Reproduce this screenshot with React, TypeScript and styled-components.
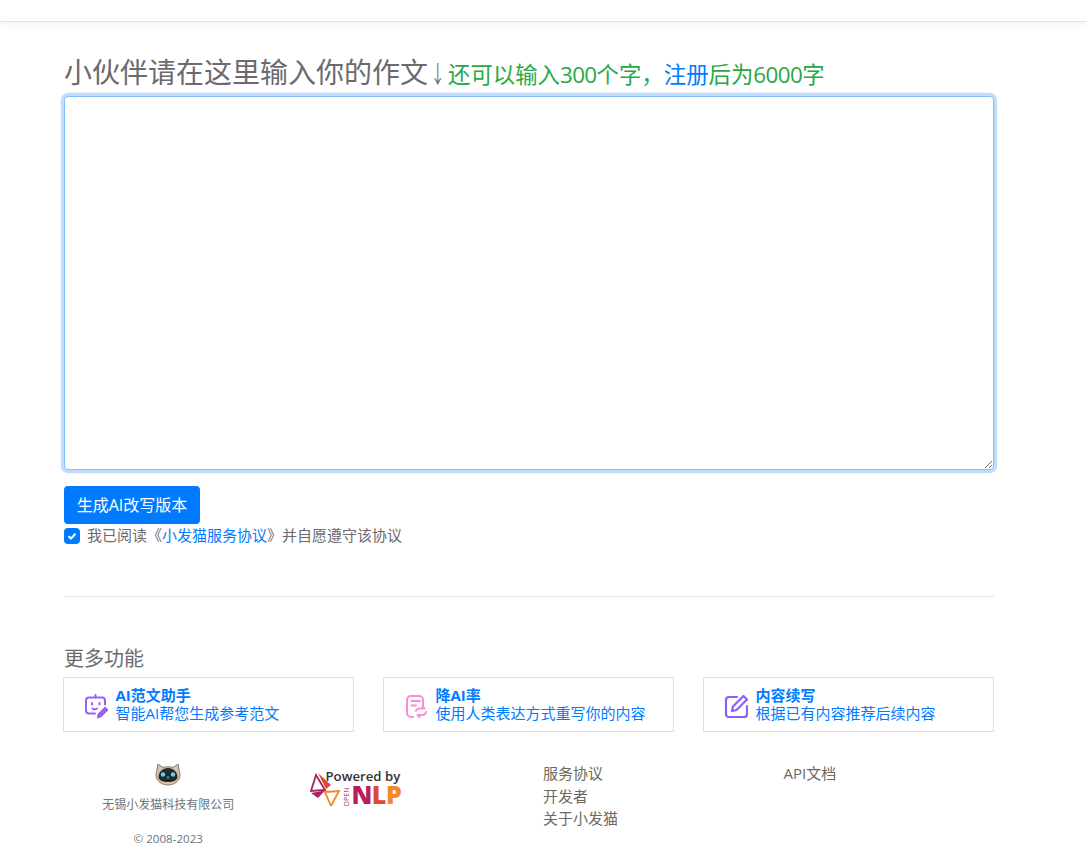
import React from 'react';
import styled, { createGlobalStyle } from 'styled-components';

const GlobalStyles = createGlobalStyle`
  html, body {
    margin: 0;
    padding: 0;
    background: #fff;
    font-family: "Open Sans", "Noto Sans CJK SC", sans-serif;
    color: #6c6a70;
  }
  * { box-sizing: border-box; }
`;

const TopBar = styled.header`
  height: 22px;
  background: #fff;
  border-bottom: 1px solid #e2e2e2;
  box-shadow: 0 2px 10px rgba(0, 0, 0, 0.06);
`;

const Main = styled.main`
  width: 930px;
  margin-left: 64px;
  padding-top: 29px;
`;

const Heading = styled.h1`
  margin: 0;
  height: 45px;
  display: flex;
  align-items: baseline;
  font-weight: 400;
  font-size: 28px;
  line-height: 43px;
  color: #6c6a70;
`;

const DownArrow = styled.span`
  display: inline-block;
  width: 13px;
  text-align: center;
  font-size: 24px;
  transform: scaleX(0.6);
`;

const Hint = styled.span`
  margin-left: 7px;
  font-size: 22.4px;
  color: #28a745;
  a { color: #007bff; text-decoration: none; }
`;

const Digits = styled.span`
  letter-spacing: -0.6px;
`;

const Editor = styled.textarea`
  display: block;
  width: 930px;
  height: 374px;
  padding: 6px 12px;
  border: 1px solid #80bdff;
  border-radius: 4px;
  outline: none;
  box-shadow: 0 0 0 3.2px rgba(0, 123, 255, 0.25);
  font: inherit;
  resize: vertical;
`;

const SubmitButton = styled.button`
  display: block;
  margin-top: 16px;
  width: 136px;
  height: 38px;
  padding: 0 0 2px;
  border: 0;
  border-radius: 4px;
  background: #007bff;
  color: #fff;
  font-family: inherit;
  font-size: 16px;
`;

const Agreement = styled.label`
  display: flex;
  align-items: center;
  gap: 7px;
  margin-top: 4px;
  height: 16px;
  font-size: 15px;
  line-height: 14px;
  a { color: #007bff; text-decoration: none; }
  & > span:last-child { margin-top: -2px; }
`;

const CheckBox = styled.span`
  width: 16px;
  height: 16px;
  border-radius: 4px;
  background: #007bff;
  display: flex;
  align-items: center;
  justify-content: center;
`;

const Divider = styled.hr`
  margin: 52px 0 0;
  border: 0;
  border-top: 1px solid #e1e3e5;
`;

const SectionTitle = styled.h2`
  margin: 47px 0 0;
  padding-top: 2px;
  font-weight: 400;
  font-size: 20px;
  line-height: 26px;
  height: 33px;
  color: #6c6a70;
`;

const Cards = styled.div`
  display: grid;
  grid-template-columns: repeat(3, 291px);
  justify-content: space-between;
  margin-left: -1px;
`;

const Card = styled.a`
  height: 55px;
  border: 1px solid #e0e0e0;
  display: flex;
  align-items: center;
  padding-left: 20px;
  gap: 7.500px;
  color: #007bff;
  text-decoration: none;
`;

const CardIcon = styled.svg`
  width: 24px;
  height: 25px;
  flex: none;
  margin-top: 3px;
`;

const CardText = styled.div`
  font-size: 15px;
  line-height: 17.5px;
  strong { display: block; font-weight: 700; }
  span { display: block; }
`;

const FooterRow = styled.footer`
  display: grid;
  grid-template-columns: repeat(4, 240.5px);
  margin: 30px 0 0 -16px;
`;

const FooterCompany = styled.div`
  display: flex;
  flex-direction: column;
  align-items: center;
  font-size: 12px;
  color: #6c757d;
`;

const CatLogo = styled.svg`
  width: 26px;
  height: 24px;
`;

const CompanyName = styled.div`
  margin-top: 10px;
  line-height: 18px;
`;

const Copyright = styled.div`
  margin-top: 16px;
  font-size: 11.6px;
  line-height: 18px;
`;

const NlpLogo = styled.div`
  position: relative;
  width: 95px;
  height: 42px;
  margin: 6px 0 0 21px;
`;

const LogoMark = styled.svg`
  position: absolute;
  left: 0;
  top: 4px;
  width: 30px;
  height: 34px;
`;

const PoweredBy = styled.span`
  position: absolute;
  left: 16px;
  top: 1px;
  font-family: "Open Sans", sans-serif;
  font-weight: 600;
  font-size: 13.2px;
  line-height: 14px;
  color: #333;
  white-space: nowrap;
`;

const OpenTag = styled.span`
  position: absolute;
  left: 28px;
  top: 25px;
  font-family: "Open Sans", sans-serif;
  font-size: 7px;
  line-height: 8px;
  color: #b0245c;
  transform: rotate(-90deg);
  transform-origin: center;
`;

const NlpText = styled.span`
  position: absolute;
  left: 42px;
  top: 16px;
  font-family: "Open Sans", sans-serif;
  font-weight: 800;
  font-size: 25px;
  line-height: 20px;
  letter-spacing: -0.5px;
  span:nth-child(1) { color: #b91d5e; }
  span:nth-child(2) { color: #dc4a35; }
  span:nth-child(3) { color: #f08a24; }
`;

const LinkColumn = styled.nav`
  padding-left: 14px;
  font-size: 15px;
  line-height: 22.5px;
  a { display: block; color: #6c6a60; text-decoration: none; }
`;

const App = () => (
  <>
    <GlobalStyles />
    <TopBar />
    <Main>
      <Heading>
        小伙伴请在这里输入你的作文
        <DownArrow>↓</DownArrow>
        <Hint>
          还可以输入<Digits>300</Digits>个字，<a href="#">注册</a>后为<Digits>6000</Digits>字
        </Hint>
      </Heading>
      <Editor />
      <SubmitButton>生成AI改写版本</SubmitButton>
      <Agreement>
        <CheckBox>
          <svg width="10" height="10" viewBox="0 0 10 10">
            <path d="M1.5 5.2 4 7.5 8.5 2.8" fill="none" stroke="#fff" strokeWidth="2" />
          </svg>
        </CheckBox>
        <span>
          我已阅读《<a href="#">小发猫服务协议</a>》并自愿遵守该协议
        </span>
      </Agreement>
      <Divider />
      <SectionTitle>更多功能</SectionTitle>
      <Cards>
        <Card href="#">
          <CardIcon viewBox="0 0 24 25" fill="none" stroke="#9b5fff" strokeWidth="2" strokeLinecap="round" strokeLinejoin="round">
            <path d="M11.500 1v2.500" />
            <path d="M11 19.500H5a3 3 0 0 1-3-3v-10a3 3 0 0 1 3-3h13a3 3 0 0 1 3 3v4" />
            <path d="M8 9v1.500M15.500 9v1.500M8.500 14.500c1.500 1 3 1 4.500 0" />
            <path d="M13.500 23.500l.6-3.500 7-7 3 2.800-7 7z" fill="#9b5fff" stroke="#9b5fff" strokeWidth="1" />
          </CardIcon>
          <CardText>
            <strong>AI范文助手</strong>
            <span>智能AI帮您生成参考范文</span>
          </CardText>
        </Card>
        <Card href="#">
          <CardIcon viewBox="0 0 24 25" fill="none" stroke="#ff8ad8" strokeWidth="2" strokeLinecap="round" strokeLinejoin="round">
            <path d="M9 23H7a4 4 0 0 1-4-4V6a4 4 0 0 1 4-4h8a4 4 0 0 1 4 4v6" />
            <path d="M7.500 7h8.500M7.500 11.500H12" />
            <path d="M12 17c.5-1.500 2-2.500 3.500-2.500h5l-2-2" />
            <path d="M22 18c-.5 1.800-2 3-3.500 3h-5l2 2" />
          </CardIcon>
          <CardText>
            <strong>降AI率</strong>
            <span>使用人类表达方式重写你的内容</span>
          </CardText>
        </Card>
        <Card href="#">
          <CardIcon viewBox="0 0 24 25" fill="none" stroke="#8f5cff" strokeWidth="2.200" strokeLinecap="round" strokeLinejoin="round">
            <path d="M13 3H5a3 3 0 0 0-3 3v14a3 3 0 0 0 3 3h15a3 3 0 0 0 3-3v-8" />
            <path d="M19.500 2 23 5.500 12.500 16 8 17l1-4.500z" />
          </CardIcon>
          <CardText>
            <strong>内容续写</strong>
            <span>根据已有内容推荐后续内容</span>
          </CardText>
        </Card>
      </Cards>
      <FooterRow>
        <FooterCompany>
          <CatLogo viewBox="0 0 26 24">
            <path d="M3 2l5 3.500c3-1 7-1 10 0L23 2l2 11c0 6-6 10-12 10S1 19 1 13z" fill="#d6c6a8" stroke="#8a7a62" strokeWidth="1" />
            <path d="M3.500 15c0-5 4-9 9.500-9s9.500 4 9.500 9c0 3-4 5-9.500 5s-9.500-2-9.500-5z" fill="#25292d" />
            <circle cx="8" cy="12.500" r="2.200" fill="#5fd3e0" />
            <circle cx="18" cy="12.500" r="2.200" fill="#5fd3e0" />
            <circle cx="13" cy="15.500" r="1.400" fill="#3f7f92" />
          </CatLogo>
          <CompanyName>无锡小发猫科技有限公司</CompanyName>
          <Copyright>© 2008-2023</Copyright>
        </FooterCompany>
        <NlpLogo>
          <LogoMark viewBox="0 0 30 34">
            <path d="M1 21 15 18.500 8 26z" fill="#a9235e" />
            <path d="M6 3 15 18 1 19z" fill="none" stroke="#a9235e" strokeWidth="1.800" />
            <path d="M8 1 21 13l-5 4z" fill="#dc4a35" />
            <path d="M15 20 29 19 21 34z" fill="none" stroke="#f08a24" strokeWidth="1.800" />
          </LogoMark>
          <PoweredBy>Powered by</PoweredBy>
          <OpenTag>OPEN</OpenTag>
          <NlpText>
            <span>N</span>
            <span>L</span>
            <span>P</span>
          </NlpText>
        </NlpLogo>
        <LinkColumn>
          <a href="#">服务协议</a>
          <a href="#">开发者</a>
          <a href="#">关于小发猫</a>
        </LinkColumn>
        <LinkColumn>
          <a href="#">API文档</a>
        </LinkColumn>
      </FooterRow>
    </Main>
  </>
);

export default App;
